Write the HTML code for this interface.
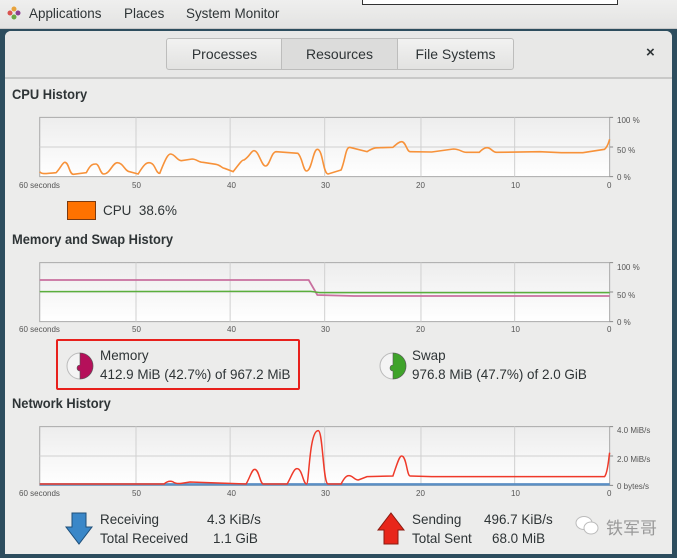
<!DOCTYPE html>
<html><head><meta charset="utf-8"><style>
body{margin:0;width:677px;height:558px;overflow:hidden;background:#2d4d5e;font-family:"Liberation Sans",sans-serif;position:relative;color:#2e3436}
.a{position:absolute;white-space:nowrap}
.top{left:0;top:0;width:677px;height:28px;background:linear-gradient(#efefee,#e3e3e2);border-bottom:1px solid #c8c8c8}
.win{left:5px;top:31px;width:667px;height:523px;background:#ececeb;border-radius:6px 6px 0 0}
.hdr{left:5px;top:31px;width:667px;height:46px;background:#e8e8e7;border-bottom:2px solid #c9c9c8;border-radius:6px 6px 0 0}
.tab{top:38px;height:30px;line-height:30px;text-align:center;font-size:14px;border:1px solid #bdbdbc;background:linear-gradient(#f2f2f1,#e2e2e1);color:#2e3436}
.h{font-size:14px;font-weight:bold;color:#2e3436;transform:scaleX(.92);transform-origin:left}
.s{font-size:8px;color:#555}
.t{font-size:14px;color:#2e3436;transform:scaleX(.96);transform-origin:left}
</style></head><body>
<div class="a top"></div>
<div class="a" style="left:362px;top:-2px;width:254px;height:5px;background:#fff;border:1px solid #333"></div>
<svg class="a" style="left:7px;top:6px" width="14" height="14" viewBox="0 0 14 14"><circle cx="7" cy="3" r="2.5" fill="#e8a33c"/><circle cx="11" cy="7" r="2.5" fill="#8b3f8f"/><circle cx="7" cy="11" r="2.5" fill="#6aa844"/><circle cx="3" cy="7" r="2.5" fill="#d9534f"/></svg>
<div class="a t" style="left:29px;top:5px;font-size:14px">Applications</div>
<div class="a t" style="left:124px;top:5px">Places</div>
<div class="a t" style="left:186px;top:5px">System Monitor</div>
<div class="a win"></div>
<div class="a hdr"></div>
<div class="a tab" style="left:166px;width:115px;border-radius:3px 0 0 3px">Processes</div>
<div class="a tab" style="left:281px;width:115px;background:#dcdcdb">Resources</div>
<div class="a tab" style="left:397px;width:115px;border-radius:0 3px 3px 0">File Systems</div>
<div class="a" style="left:646px;top:44px;font-size:15px;font-weight:bold">×</div>

<div class="a h" style="left:12px;top:86px">CPU History</div>
<div class="a h" style="left:12px;top:231px">Memory and Swap History</div>
<div class="a h" style="left:12px;top:395px">Network History</div>

<svg class="a" style="left:0;top:110px" width="677" height="220" viewBox="0 0 1568 660" preserveAspectRatio="none">
<defs><linearGradient id="g" x1="0" y1="0" x2="0" y2="1"><stop offset="0" stop-color="#ededed"/><stop offset="1" stop-color="#ffffff"/></linearGradient></defs>
<rect x="92" y="22" width="1320" height="178" fill="url(#g)" stroke="#aaa" vector-effect="non-scaling-stroke"/>
<rect x="92" y="458" width="1320" height="177" fill="url(#g)" stroke="#aaa" vector-effect="non-scaling-stroke"/>
<g stroke="#d0d0d0" vector-effect="non-scaling-stroke">
<path d="M315 22V200M533 22V200M752 22V200M975 22V200M1192 22V200M92 111H1412M315 458V635M533 458V635M752 458V635M975 458V635M1192 458V635M92 546H1412" vector-effect="non-scaling-stroke"/>
</g>
<path d="M1412 22h8M1412 111h8M1412 200h8M1412 458h8M1412 546h8M1412 635h8" stroke="#888" vector-effect="non-scaling-stroke"/>
<path d="M92,185 C96,192 100,192 130,188 C140,175 145,157 150,157 C160,157 160,193 170,193 L200,188 C210,162 215,162 222,162 C230,162 232,192 240,192 C255,192 260,158 272,158 C285,158 290,185 300,185 L320,192 C335,160 340,158 345,158 C360,158 360,190 370,190 C385,140 390,132 395,132 C405,132 410,152 420,152 L445,147 C455,147 460,157 470,157 L500,163 C510,165 515,175 520,175 L540,185 C555,160 560,150 565,150 C578,140 582,122 588,122 C600,122 605,168 615,168 C625,168 628,125 640,125 L690,130 C700,140 702,183 710,183 C722,183 725,118 735,118 C748,118 748,192 760,192 L790,180 C800,150 800,112 810,112 L850,125 C865,113 870,113 880,113 L910,112 C920,100 925,95 930,95 C940,95 942,125 950,125 L1000,126 L1050,117 C1065,117 1070,127 1080,127 L1110,127 C1120,113 1125,113 1128,113 C1138,113 1140,127 1150,127 L1250,125 L1300,128 L1350,128 L1400,118 C1408,110 1410,95 1412,88" fill="none" stroke="#f7923a" stroke-width="1.6" vector-effect="non-scaling-stroke"/>
<path d="M92,510 L715,510 L735,555 L820,558 L1412,558" fill="none" stroke="#c9709f" stroke-width="1.8" vector-effect="non-scaling-stroke"/>
<path d="M92,545 L720,544 L740,548 L1412,548" fill="none" stroke="#5aae3c" stroke-width="1.5" vector-effect="non-scaling-stroke"/>
</svg>

<svg class="a" style="left:0;top:330px" width="677" height="228" viewBox="0 0 1568 684" preserveAspectRatio="none">
<defs><linearGradient id="g2" x1="0" y1="0" x2="0" y2="1"><stop offset="0" stop-color="#ededed"/><stop offset="1" stop-color="#ffffff"/></linearGradient></defs>
<rect x="92" y="290" width="1320" height="176" fill="url(#g2)" stroke="#aaa" vector-effect="non-scaling-stroke"/>
<path d="M315 290V466M533 290V466M752 290V466M975 290V466M1192 290V466M92 378H1412" stroke="#d0d0d0" vector-effect="non-scaling-stroke"/>
<path d="M1412 290h8M1412 378h8M1412 466h8" stroke="#888" vector-effect="non-scaling-stroke"/>
<path d="M92,463 H1412" stroke="#5b8fc4" stroke-width="2.5" vector-effect="non-scaling-stroke"/>
<path d="M92,462 L380,462 C388,453 395,453 400,455 C405,460 410,462 420,460 L440,456 L480,458 L570,462 C580,440 583,418 590,418 C600,418 602,462 610,462 L665,462 C675,440 680,416 688,416 C700,416 702,462 710,462 C716,462 716,302 737,302 C748,302 748,462 760,462 L790,462 C800,437 805,437 808,437 C818,437 820,450 830,450 L850,440 L910,438 C920,400 925,378 930,378 C942,378 942,438 950,438 L1000,440 L1400,440 C1408,430 1410,380 1412,368" fill="none" stroke="#ef3a2a" stroke-width="1.5" vector-effect="non-scaling-stroke"/>
</svg>

<div class="a s" style="left:19px;top:181px">60 seconds</div>
<div class="a s" style="left:132px;top:181px">50</div><div class="a s" style="left:227px;top:181px">40</div><div class="a s" style="left:321px;top:181px">30</div><div class="a s" style="left:416px;top:181px">20</div><div class="a s" style="left:511px;top:181px">10</div><div class="a s" style="left:607px;top:181px">0</div>
<div class="a s" style="left:617px;top:116px">100 %</div><div class="a s" style="left:617px;top:146px">50 %</div><div class="a s" style="left:617px;top:173px">0 %</div>

<div class="a s" style="left:19px;top:325px">60 seconds</div>
<div class="a s" style="left:132px;top:325px">50</div><div class="a s" style="left:227px;top:325px">40</div><div class="a s" style="left:321px;top:325px">30</div><div class="a s" style="left:416px;top:325px">20</div><div class="a s" style="left:511px;top:325px">10</div><div class="a s" style="left:607px;top:325px">0</div>
<div class="a s" style="left:617px;top:263px">100 %</div><div class="a s" style="left:617px;top:291px">50 %</div><div class="a s" style="left:617px;top:318px">0 %</div>

<div class="a s" style="left:19px;top:489px">60 seconds</div>
<div class="a s" style="left:132px;top:489px">50</div><div class="a s" style="left:227px;top:489px">40</div><div class="a s" style="left:321px;top:489px">30</div><div class="a s" style="left:416px;top:489px">20</div><div class="a s" style="left:511px;top:489px">10</div><div class="a s" style="left:607px;top:489px">0</div>
<div class="a s" style="left:617px;top:426px">4.0 MiB/s</div><div class="a s" style="left:617px;top:455px">2.0 MiB/s</div><div class="a s" style="left:617px;top:482px">0 bytes/s</div>

<div class="a" style="left:67px;top:201px;width:27px;height:17px;background:#ff7200;border:1px solid #7a3a10"></div>
<div class="a t" style="left:103px;top:202px">CPU&nbsp; 38.6%</div>

<div class="a" style="left:56px;top:339px;width:240px;height:47px;border:2px solid #e8201c;border-radius:2px"></div>
<svg class="a" style="left:65px;top:351px" width="30" height="30" viewBox="0 0 30 30"><circle cx="15" cy="15" r="13" fill="#f4f4f4" stroke="#bbb"/><path d="M15 2A13 13 0 0 1 15 28V20A3 3 0 0 1 15 14Z" fill="#b5105a" stroke="#555" stroke-width=".6"/></svg>
<div class="a t" style="left:100px;top:347px">Memory</div>
<div class="a t" style="left:100px;top:366px">412.9 MiB (42.7%) of 967.2 MiB</div>
<svg class="a" style="left:378px;top:351px" width="30" height="30" viewBox="0 0 30 30"><circle cx="15" cy="15" r="13" fill="#f4f4f4" stroke="#bbb"/><path d="M15 2A13 13 0 0 1 15 28V20A3 3 0 0 1 15 14Z" fill="#3fa32a" stroke="#555" stroke-width=".6"/></svg>
<div class="a t" style="left:412px;top:347px">Swap</div>
<div class="a t" style="left:412px;top:366px">976.8 MiB (47.7%) of 2.0 GiB</div>

<svg class="a" style="left:64px;top:512px" width="30" height="34" viewBox="0 0 30 34"><path d="M8 1H22V15H28L15 32L2 15H8Z" fill="#3a87c8" stroke="#1e4f7a"/></svg>
<div class="a t" style="left:100px;top:511px">Receiving</div>
<div class="a t" style="left:100px;top:530px">Total Received</div>
<div class="a t" style="left:207px;top:511px">4.3 KiB/s</div>
<div class="a t" style="left:213px;top:530px">1.1 GiB</div>
<svg class="a" style="left:376px;top:512px" width="30" height="34" viewBox="0 0 30 34"><path d="M15 1L28 18H22V32H8V18H2Z" fill="#e8261a" stroke="#8a1a10"/></svg>
<div class="a t" style="left:412px;top:511px">Sending</div>
<div class="a t" style="left:412px;top:530px">Total Sent</div>
<div class="a t" style="left:484px;top:511px">496.7 KiB/s</div>
<div class="a t" style="left:492px;top:530px">68.0 MiB</div>

<svg class="a" style="left:575px;top:515px" width="26" height="22" viewBox="0 0 26 22"><ellipse cx="9" cy="8" rx="8" ry="6.5" fill="#fff" stroke="#bbb"/><ellipse cx="16" cy="13" rx="7" ry="6" fill="#fff" stroke="#bbb"/></svg>
<div class="a" style="left:606px;top:514px;font-size:17px;color:#999;font-family:'Noto Sans CJK SC',sans-serif">铁军哥</div>
</body></html>
